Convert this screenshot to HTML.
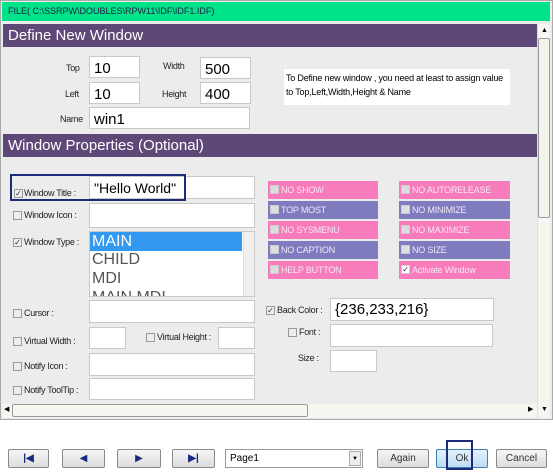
<!DOCTYPE html><html><head><style>
*{box-sizing:border-box;margin:0;padding:0}
body{width:553px;height:473px;background:#fff;font-family:"Liberation Sans",sans-serif;position:relative;overflow:hidden}
.a{position:absolute}
.in{position:absolute;background:#fff;border:1px solid #c8c8c8}
.lb{position:absolute;font-size:9px;color:#222;letter-spacing:-0.3px}
.big{font-size:15px;color:#000;padding:3px 4px}
.ph{position:absolute;left:3px;width:534px;height:23px;background:#5e4878;color:#fff;font-size:15px;padding:3px 5px}
.cb{position:absolute;width:9px;height:9px;border:1px solid #999;background:#eee;font-size:8px;line-height:8px;text-align:center;color:#225}
.tg{position:absolute;height:18px;color:#f4e8f4;font-size:9px;padding:4px 0 0 13px;letter-spacing:-0.2px}
.tg .cb{left:2px;top:4px;background:#ddd;border-color:#ccc}
.pk{background:#f87cbc}.pu{background:#7e7cbe}
.btn{position:absolute;top:449px;height:19px;border:1px solid #8a8a8a;border-radius:2px;background:linear-gradient(#f6f6f6,#dcdcdc);font-size:10px;text-align:center;line-height:17px;color:#333}
</style></head><body>
<div class="a" style="left:0;top:0;width:553px;height:420px;background:#ececec;border:1px solid #aaa"></div>
<div class="a" style="left:2px;top:2px;width:548px;height:19px;background:#00e38a;font-size:9px;padding:4px 6px;color:#224">FILE( C:\SSRPW\DOUBLES\RPW11\IDF\IDF1.IDF)</div>
<div class="ph" style="top:24px">Define New Window</div>
<div class="lb" style="left:66px;top:63px">Top</div>
<div class="in big" style="left:89px;top:56px;width:51px;height:22px">10</div>
<div class="lb" style="left:163px;top:61px">Width</div>
<div class="in big" style="left:200px;top:57px;width:51px;height:22px">500</div>
<div class="lb" style="left:65px;top:89px">Left</div>
<div class="in big" style="left:89px;top:82px;width:51px;height:22px">10</div>
<div class="lb" style="left:162px;top:89px">Height</div>
<div class="in big" style="left:200px;top:82px;width:51px;height:22px">400</div>
<div class="lb" style="left:60px;top:114px">Name</div>
<div class="in big" style="left:89px;top:107px;width:161px;height:22px">win1</div>
<div class="a" style="left:284px;top:69px;width:226px;height:36px;background:#fff;font-size:9px;line-height:14px;padding:2px 2px;letter-spacing:-0.2px">To Define new window , you need at least to assign value to Top,Left,Width,Height &amp; Name</div>
<div class="ph" style="top:134px">Window Properties (Optional)</div>
<div class="in big" style="left:89px;top:176px;width:166px;height:23px;font-size:14px;padding-top:3px">"Hello World"</div>
<div class="a" style="left:10px;top:174px;width:176px;height:27px;border:2px solid #1e2a78"></div>
<div class="cb" style="left:14px;top:189px">✓</div><div class="lb" style="left:24px;top:188px">Window Title :</div>
<div class="in" style="left:89px;top:203px;width:166px;height:25px"></div>
<div class="cb" style="left:13px;top:211px"></div><div class="lb" style="left:24px;top:210px">Window Icon :</div>
<div class="cb" style="left:13px;top:238px">✓</div><div class="lb" style="left:24px;top:237px">Window Type :</div>
<div class="in" style="left:89px;top:231px;width:166px;height:66px;overflow:hidden;font-size:16px;color:#555">
<div style="background:#3399f0;color:#fff;width:152px;height:19px;padding:1px 2px">MAIN</div>
<div style="padding:0 2px;height:19px">CHILD</div><div style="padding:0 2px;height:19px">MDI</div><div style="padding:0 2px">MAIN MDI</div>
<div class="a" style="right:0;top:0;width:11px;height:64px;background:#f0f0f0;border-left:1px solid #ddd"></div></div>
<div class="tg pk" style="left:268px;top:181px;width:110px"><div class="cb"></div>NO SHOW</div>
<div class="tg pu" style="left:268px;top:201px;width:110px"><div class="cb"></div>TOP MOST</div>
<div class="tg pk" style="left:268px;top:221px;width:110px"><div class="cb"></div>NO SYSMENU</div>
<div class="tg pu" style="left:268px;top:241px;width:110px"><div class="cb"></div>NO CAPTION</div>
<div class="tg pk" style="left:268px;top:261px;width:110px"><div class="cb"></div>HELP BUTTON</div>
<div class="tg pk" style="left:399px;top:181px;width:111px"><div class="cb"></div>NO AUTORELEASE</div>
<div class="tg pu" style="left:399px;top:201px;width:111px"><div class="cb"></div>NO MINIMIZE</div>
<div class="tg pk" style="left:399px;top:221px;width:111px"><div class="cb"></div>NO MAXIMIZE</div>
<div class="tg pu" style="left:399px;top:241px;width:111px"><div class="cb"></div>NO SIZE</div>
<div class="tg pk" style="left:399px;top:261px;width:111px"><div class="cb" style="background:#fff;color:#225">✓</div>Activate Window</div>
<div class="cb" style="left:13px;top:309px"></div><div class="lb" style="left:24px;top:308px">Cursor :</div>
<div class="in" style="left:89px;top:300px;width:166px;height:23px"></div>
<div class="cb" style="left:13px;top:337px"></div><div class="lb" style="left:24px;top:336px">Virtual Width :</div>
<div class="in" style="left:89px;top:327px;width:37px;height:22px"></div>
<div class="cb" style="left:146px;top:333px"></div><div class="lb" style="left:157px;top:332px">Virtual Height :</div>
<div class="in" style="left:218px;top:327px;width:37px;height:22px"></div>
<div class="cb" style="left:13px;top:362px"></div><div class="lb" style="left:24px;top:361px">Notify Icon :</div>
<div class="in" style="left:89px;top:353px;width:166px;height:23px"></div>
<div class="cb" style="left:13px;top:386px"></div><div class="lb" style="left:24px;top:385px">Notify ToolTip :</div>
<div class="in" style="left:89px;top:378px;width:166px;height:22px"></div>
<div class="cb" style="left:266px;top:306px">✓</div><div class="lb" style="left:277px;top:305px">Back Color :</div>
<div class="in big" style="left:330px;top:298px;width:164px;height:23px;padding-top:2px">{236,233,216}</div>
<div class="cb" style="left:288px;top:328px"></div><div class="lb" style="left:299px;top:327px">Font :</div>
<div class="in" style="left:330px;top:324px;width:163px;height:23px"></div>
<div class="lb" style="left:298px;top:353px">Size :</div>
<div class="in" style="left:330px;top:350px;width:47px;height:22px"></div>
<div class="a" style="left:537px;top:24px;width:13px;height:394px;background:#f6f6f0;border-left:1px solid #ddd"></div>
<div class="a" style="left:538px;top:38px;width:12px;height:180px;background:#f3f3ee;border:1px solid #999;border-radius:2px"></div>
<div class="a" style="left:541px;top:27px;font-size:7px">▲</div><div class="a" style="left:541px;top:406px;font-size:7px">▼</div>
<div class="a" style="left:3px;top:404px;width:534px;height:14px;background:#f6f6f0"></div>
<div class="a" style="left:12px;top:404px;width:296px;height:13px;border:1px solid #999;border-radius:2px;background:#f6f6f0"></div>
<div class="a" style="left:4px;top:405px;font-size:7px">◀</div><div class="a" style="left:528px;top:405px;font-size:7px">▶</div>
<div class="btn" style="left:8px;width:41px;color:#1a2a80;font-weight:bold">|◀</div>
<div class="btn" style="left:62px;width:43px;color:#1a2a80">◀</div>
<div class="btn" style="left:117px;width:44px;color:#1a2a80">▶</div>
<div class="btn" style="left:172px;width:43px;color:#1a2a80;font-weight:bold">▶|</div>
<div class="a" style="left:225px;top:449px;width:138px;height:19px;border:1px solid #999;background:#fff;font-size:10px;padding:3px 4px">Page1<div class="a" style="right:1px;top:1px;width:12px;height:15px;border:1px solid #aaa;background:#eee;font-size:6px;text-align:center;line-height:14px">▼</div></div>
<div class="btn" style="left:377px;width:52px">Again</div>
<div class="btn" style="left:436px;width:52px;background:linear-gradient(#e4f2fc,#bcdcf4);border-color:#3c7fb1">Ok</div>
<div class="a" style="left:446px;top:440px;width:27px;height:30px;border:2px solid #1e2a78"></div>
<div class="btn" style="left:496px;width:51px">Cancel</div>
</body></html>
